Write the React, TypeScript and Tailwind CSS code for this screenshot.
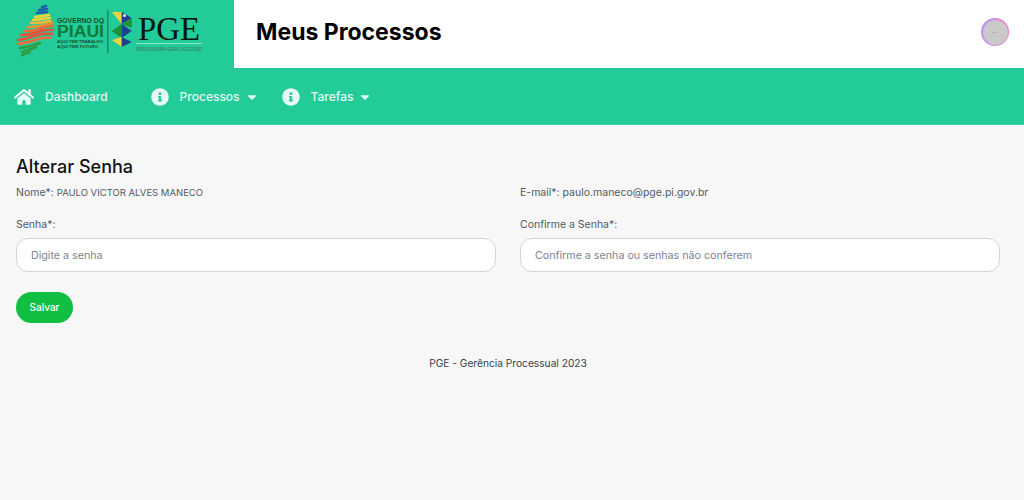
import React from 'react'
import { FaHome, FaInfoCircle, FaCaretDown } from 'react-icons/fa'

function Logo() {
  const sans = "'Liberation Sans', sans-serif"
  return (
    <svg width="234" height="68" viewBox="0 0 234 68" className="shrink-0">
      {/* mapa do Piaui */}
      <g fill="none" strokeWidth="2.6" strokeLinecap="round">
        <path d="M42 7 L46 6 M39 10 L47 9 M37 13 L47 12" stroke="#1c5fa8" />
        <path d="M35 17 L49 15 M33 20 L50 18" stroke="#f2d33c" />
        <path d="M31 23 Q42 23 50 21" stroke="#f5b83c" />
        <path d="M28 27 Q40 27 52 23" stroke="#f0913a" />
        <path d="M25 31 Q35 31 42 28 T53 26" stroke="#ef6a3a" />
        <path d="M21 35 Q30 35 38 32 T53 30" stroke="#e8503a" />
        <path d="M18 40 Q26 39 34 36 T52 34" stroke="#e8503a" />
        <path d="M18 44 Q27 43 35 40 T50 38" stroke="#ef6a3a" />
        <path d="M20 48 Q30 47 40 43" stroke="#2f9e44" />
        <path d="M22 52 Q30 50 36 47" stroke="#2f9e44" />
        <path d="M22 55 L30 52" stroke="#2f9e44" />
      </g>
      <text x="57" y="23" textLength="47" lengthAdjust="spacingAndGlyphs" fontFamily={sans} fontSize="6.5" fontWeight="700" fill="#14532d">GOVERNO DO</text>
      <text x="57" y="37" textLength="47" lengthAdjust="spacingAndGlyphs" fontFamily={sans} fontSize="16" fontWeight="700" fill="#0f7a3b">PIAUÍ</text>
      <text x="57" y="43" textLength="46" lengthAdjust="spacingAndGlyphs" fontFamily={sans} fontSize="4" fontWeight="700" fill="#14532d">AQUI TEM TRABALHO</text>
      <text x="57" y="48" textLength="41" lengthAdjust="spacingAndGlyphs" fontFamily={sans} fontSize="4" fontWeight="700" fill="#14532d">AQUI TEM FUTURO</text>
      <rect x="107" y="10" width="1.5" height="43" fill="#15905f" />
      {/* bandeirinhas */}
      <path d="M112 12 L121.7 12 L121.7 24 Z" fill="#f2d33c" />
      <path d="M121.7 12 L131.7 18 L121.7 24 Z" fill="#1f3f94" />
      <circle cx="124.5" cy="15.5" r="1.5" fill="#e8eef5" />
      <path d="M131.7 18 L131.7 28 L121.7 24 Z" fill="#1f8f3a" />
      <path d="M111.7 31 L121.7 24 L121.7 38 Z" fill="#1f8f3a" />
      <path d="M121.7 24 L131.7 31 L121.7 38 Z" fill="#1f3f94" />
      <path d="M112 40 L121.7 37 L121.7 47 Z" fill="#f2d33c" />
      <path d="M121.7 37 L131.7 42 L121.7 47 Z" fill="#1f3f94" />
      <text x="138" y="39.5" textLength="62" lengthAdjust="spacingAndGlyphs" fontFamily="'Liberation Serif', serif" fontSize="33" fill="#06170f">PGE</text>
      <rect x="136" y="43" width="66" height="0.7" fill="#c9f0e2" />
      <text x="136" y="51" textLength="66" lengthAdjust="spacingAndGlyphs" fontFamily={sans} fontSize="4.6" fill="#4a6b62">PROCURADORIA GERAL DO ESTADO</text>
    </svg>
  )
}

function NavItem({ icon, label, caret }: { icon: React.ReactNode; label: string; caret?: boolean }) {
  return (
    <a className="flex items-center text-[12px] font-medium text-[#e6f9f2]">
      {icon}
      <span>{label}</span>
      {caret && <FaCaretDown className="ml-[5px] text-[14px]" />}
    </a>
  )
}

export default function App() {
  return (
    <div className="min-h-[500px] bg-[#f7f7f7] font-['Inter',sans-serif] text-[#525a66]">
      <header className="flex h-[68px] bg-white">
        <div className="w-[234px] bg-[#22cb98]">
          <Logo />
        </div>
        <div className="flex flex-1 items-center justify-between pb-[4px] pl-[22px] pr-[15px]">
          <h1 className="text-[23px] font-bold text-black">Meus Processos</h1>
          <div className="h-[28px] w-[28px] rounded-full bg-gradient-to-r from-[#b794f6] to-[#f080d0] p-[1.5px]">
            <div className="flex h-full w-full items-center justify-center rounded-full bg-[#c9c9c9] text-[5px] text-[#888]">
              ....
            </div>
          </div>
        </div>
      </header>

      <nav className="flex h-[57px] items-center border-b border-[#3fd3a6] bg-[#22cb98] pl-[14px] pt-[1px]">
        <NavItem icon={<FaHome className="mr-[11px] text-[20px]" />} label="Dashboard" />
        <div className="ml-[43px]">
          <NavItem icon={<FaInfoCircle className="mr-[11px] text-[18px]" />} label="Processos" caret />
        </div>
        <div className="ml-[23px]">
          <NavItem icon={<FaInfoCircle className="mr-[11px] text-[18px]" />} label="Tarefas" caret />
        </div>
      </nav>

      <main className="px-[16px] pt-[32px]">
        <h2 className="text-[18px] font-medium leading-[20px] text-[#111]">Alterar Senha</h2>

        <div className="mt-[8px] grid grid-cols-2 gap-x-[24px] pr-[8px]">
          <div>
            <p className="text-[10.5px] leading-[16px]">
              Nome*: <span className="text-[9.5px]">PAULO VICTOR ALVES MANECO</span>
            </p>
            <label className="mt-[16px] block text-[10.5px] leading-[16px]">Senha*:</label>
            <input
              className="mt-[5px] h-[34px] w-full rounded-[12px] border border-[#d4d4d4] bg-white px-[14px] text-[10.7px] placeholder:text-[#7b8494]"
              placeholder="Digite a senha"
            />
          </div>
          <div>
            <p className="text-[10.5px] leading-[16px]">E-mail*: paulo.maneco@pge.pi.gov.br</p>
            <label className="mt-[16px] block text-[10.5px] leading-[16px]">Confirme a Senha*:</label>
            <input
              className="mt-[5px] h-[34px] w-full rounded-[12px] border border-[#d4d4d4] bg-white px-[14px] text-[10.7px] placeholder:text-[#7b8494]"
              placeholder="Confirme a senha ou senhas não conferem"
            />
          </div>
        </div>

        <button className="mt-[20px] h-[31px] w-[57px] rounded-full bg-[#10bf41] text-[10px] font-medium text-white">
          Salvar
        </button>

        <p className="mt-[32px] pr-[8px] text-center text-[10.2px] leading-[16px] text-[#374151]">PGE - Gerência Processual 2023</p>
      </main>
    </div>
  )
}
